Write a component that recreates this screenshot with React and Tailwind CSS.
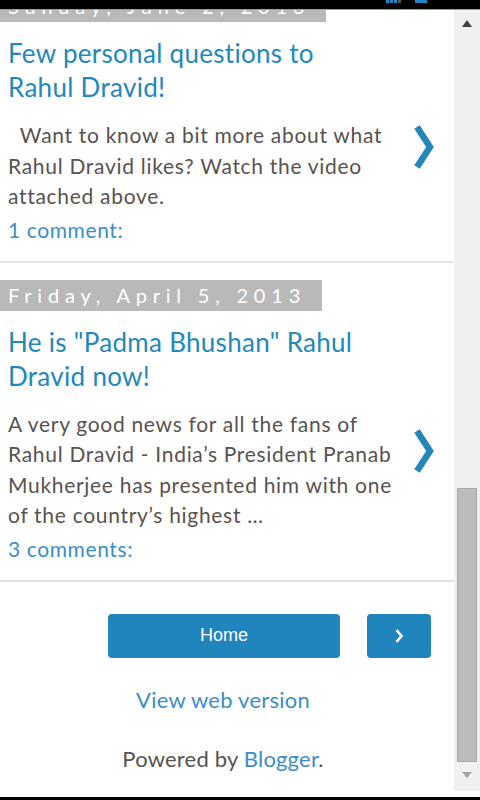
const Chevron = ({ className }) => (
  <svg width="22" height="46" viewBox="0 0 22 46" className={className}>
    <polyline points="4,3 17,23 4,43" fill="none" stroke="#2288bb" strokeWidth="6.5" strokeLinejoin="miter" />
  </svg>
);

function DateHeader({ text, width, clip }) {
  return (
    <div className={`bg-[#b9b9b9] overflow-hidden ${clip ? "h-[12px]" : "h-[31px]"}`} style={{ width }}>
      <div
        className={`h-[31px] pl-[8px] leading-[31px] text-[20px] tracking-[5.8px] text-white whitespace-nowrap ${clip ? "-mt-[19px]" : ""}`}
      >
        {text}
      </div>
    </div>
  );
}

function Post({ date, dateWidth, clip, title, lines, comments, chevronTop }) {
  return (
    <div className="border-b-2 border-[#e2e2e2]">
      <DateHeader text={date} width={dateWidth} clip={clip} />
      <h3 className="mt-[14px] pl-[8px] text-[26px] leading-[34px] tracking-[0.3px] text-[#2288bb] font-normal">
        {title[0]}
        <br />
        {title[1]}
      </h3>
      <div className="mt-[16px] flex">
        <p className="w-[405px] pl-[8px] text-[21px] leading-[30.5px] tracking-[0.7px] text-[#585250] whitespace-pre">
          {lines.map((l, i) => (
            <span key={i}>
              {l}
              {i < lines.length - 1 && <br />}
            </span>
          ))}
        </p>
        <div className="pl-[8px]" style={{ paddingTop: chevronTop }}>
          <Chevron />
        </div>
      </div>
      <div className="pl-[8px] pt-[2px] pb-[16px] text-[21px] leading-[31px] tracking-[0.6px] text-[#3b8ec6]">
        {comments}
      </div>
    </div>
  );
}

export default function App() {
  return (
    <div className="w-[480px] h-[800px] bg-white flex flex-col overflow-hidden font-['Lato',sans-serif]">
      {/* status bar remnant */}
      <div className="h-[9px] bg-black flex items-start shrink-0">
        <div className="ml-[386px] flex gap-[1px]">
          <div className="w-[3px] h-[3px] bg-[#1e88c8]" />
          <div className="w-[3px] h-[3px] bg-[#1e88c8]" />
          <div className="w-[3px] h-[3px] bg-[#1e88c8]" />
          <div className="w-[3px] h-[3px] bg-[#555]" />
        </div>
        <div className="ml-[14px] w-[12px] h-[3px] bg-[#1e88c8]" />
      </div>
      <div className="h-[1px] bg-[#9a9a9a] shrink-0" />

      <div className="flex h-[782px] shrink-0">
        <main className="w-[454px] overflow-hidden">
          <Post
            date="Sunday, June 2, 2013"
            dateWidth={326}
            clip
            title={["Few personal questions to", "Rahul Dravid!"]}
            lines={["  Want to know a bit more about what", "Rahul Dravid likes? Watch the video", "attached above."]}
            comments="1 comment:"
            chevronTop={4}
          />
          <div className="h-[17px]" />
          <Post
            date="Friday, April 5, 2013"
            dateWidth={322}
            title={['He is "Padma Bhushan" Rahul', "Dravid now!"]}
            lines={[
              "A very good news for all the fans of",
              "Rahul Dravid - India\u2019s President Pranab",
              "Mukherjee has presented him with one",
              "of the country\u2019s highest \u2026",
            ]}
            comments="3 comments:"
            chevronTop={19}
          />

          <div className="mt-[32px] flex pl-[108px] gap-[27px]">
            <button className="w-[232px] h-[44px] rounded-[4px] bg-[#2185bd] text-white text-[18px] font-['Liberation_Sans',sans-serif]">
              Home
            </button>
            <button className="w-[64px] h-[44px] rounded-[4px] bg-[#2185bd] flex items-center justify-center">
              <svg width="10" height="16" viewBox="0 0 10 16">
                <polyline points="2.5,2 7.5,8 2.5,14" fill="none" stroke="white" strokeWidth="2.6" />
              </svg>
            </button>
          </div>

          <div className="w-[446px] text-center">
            <div className="mt-[27px] text-[22px] leading-[30px] tracking-[0.25px] text-[#3b8ec6]">View web version</div>
            <div className="mt-[29px] text-[22px] leading-[30px] tracking-[0.2px] text-[#585250]">
              Powered by <span className="text-[#3b8ec6]">Blogger</span>.
            </div>
          </div>
        </main>

        {/* scrollbar */}
        <div className="w-[26px] h-[781px] bg-[#f0f0f0] flex flex-col items-center">
          <div className="mt-[10px] w-0 h-0 border-l-[5px] border-r-[5px] border-b-[7px] border-l-transparent border-r-transparent border-b-[#404040]" />
          <div className="mt-[461px] w-[20px] h-[274px] bg-[#bcbcbc] border border-[#a9a9a9]" />
          <div className="mt-[10px] w-0 h-0 border-l-[5px] border-r-[5px] border-t-[6px] border-l-transparent border-r-transparent border-t-[#a3a3a3]" />
        </div>
      </div>
      <div className="h-[5px] bg-white shrink-0" />
      <div className="flex-1 bg-black" />
    </div>
  );
}
